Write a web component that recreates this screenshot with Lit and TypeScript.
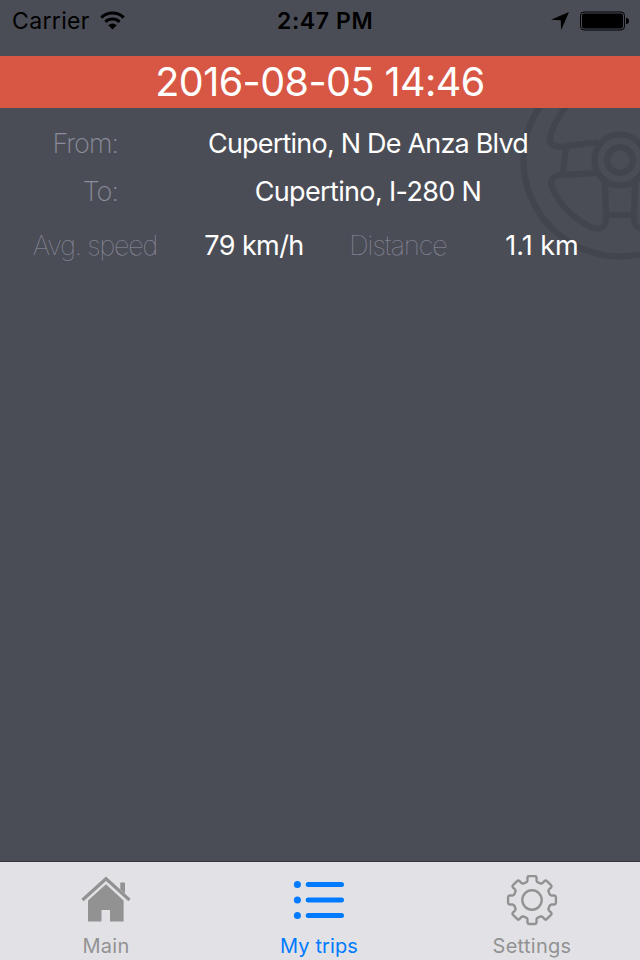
import { LitElement, html, css, svg } from "lit";
import { customElement, property } from "lit/decorators.js";

function gearPath(cx: number, cy: number): string {
  const pt = (r: number, a: number) =>
    `${(cx + r * Math.sin(a)).toFixed(2)} ${(cy - r * Math.cos(a)).toFixed(2)}`;
  let d = "";
  for (let k = 0; k < 8; k++) {
    const a = (k * Math.PI) / 4;
    d += `${k ? "L" : "M"}${pt(18.6, a - 0.3)}`;
    d += `Q${pt(19.1, a - 0.24)} ${pt(20.2, a - 0.225)}`;
    d += `L${pt(23, a - 0.2)}Q${pt(24.2, a - 0.18)} ${pt(24.1, a - 0.12)}`;
    d += `L${pt(24.1, a + 0.12)}Q${pt(24.2, a + 0.18)} ${pt(23, a + 0.2)}`;
    d += `L${pt(20.2, a + 0.225)}Q${pt(19.1, a + 0.24)} ${pt(18.6, a + 0.3)}`;
  }
  return d + "Z";
}

const icons = {
  home: svg`
    <path d="M2.500 25 26 3.700 49.500 25" fill="none" stroke="#929292" stroke-width="3.200"/>
    <path d="M26 9.300 43.600 25.500V46.500H30V35H21.500V46.500H8V25.500Z" fill="#929292"/>
    <path d="M40.300 7.500H45V18.500L40.300 14.200Z" fill="#929292"/>`,
  list: svg`
    <g stroke="#007aff" stroke-width="5" stroke-linecap="round">
      <path d="M15.200 9.500H48.500M15.200 25H48.500M15.200 40.500H48.500"/>
    </g>
    <g fill="#007aff"><circle cx="4.400" cy="9.500" r="3.500"/><circle cx="4.400" cy="25" r="3.500"/><circle cx="4.400" cy="40.500" r="3.500"/></g>`,
  gear: svg`
    <g fill="none" stroke="#929292" stroke-width="2.400" stroke-linejoin="round">
      <path d=${gearPath(26, 25)}/><circle cx="26" cy="25" r="9.700"/>
    </g>`,
};

@customElement("status-bar")
class StatusBar extends LitElement {
  static styles = css`
    :host { display: grid; grid-template-columns: 277px 1fr auto; align-items: center; height: 41px; padding-right: 11px; margin-bottom: 15px; font-size: 23px; color: #000; box-sizing: border-box; }
    .side { display: flex; align-items: center; }
    .left { padding-left: 12px; }
    .carrier { letter-spacing: 0.35px; margin-right: 10px; }
    .time { font-weight: 600; letter-spacing: 0.6px; }
    .arrow { margin-right: 11px; }
    svg { display: block; }
  `;
  render() {
    return html`
      <div class="side left">
        <span class="carrier">Carrier</span>
        <svg width="25" height="19" viewBox="0 0 25 19">
          <g fill="none" stroke="#000" stroke-width="3">
            <path d="M1.300 6.600A16 16 0 0 1 23.700 6.600"/>
            <path d="M5.400 10.900A10.300 10.300 0 0 1 19.600 10.900"/>
          </g>
          <path d="M12.500 18.500 8.300 14.200A6 6 0 0 1 16.700 14.200Z"/>
        </svg>
      </div>
      <span class="time">2:47 PM</span>
      <div class="side">
        <svg class="arrow" width="18" height="18" viewBox="0 0 18 18"><path d="M18 0 10.200 18 9.700 8.300 0 7.800Z"/></svg>
        <svg width="49" height="20" viewBox="0 0 49 20">
          <rect x=".5" y="1" width="44" height="18" rx="3.500" fill="none" stroke="#000"/>
          <rect x="2" y="2.500" width="41" height="15" rx="2"/>
          <path d="M46 6.700q3 .6 3 3.300t-3 3.300Z"/>
        </svg>
      </div>`;
  }
}

@customElement("trip-card")
class TripCard extends LitElement {
  @property() date = "";
  @property() from = "";
  @property() to = "";
  @property() speed = "";
  @property() distance = "";
  static styles = css`
    :host { display: block; font-size: 27px; color: #fff; }
    .date { background: #d85744; height: 52px; line-height: 53px; text-align: center; font-size: 39.5px; letter-spacing: -0.55px; }
    .body { position: relative; overflow: hidden; padding-top: 12px; height: 152px; }
    .wheel { position: absolute; right: 0; top: 0; }
    .row { position: relative; display: grid; grid-template-columns: 118px 500px; height: 48px; line-height: 48px; white-space: nowrap; }
    .label { font-weight: 200; color: #8c8c9c; letter-spacing: -0.95px; }
    .row .label { text-align: right; }
    .stats { position: relative; display: grid; grid-template-columns: 190px 128px 160px 128px; height: 48px; line-height: 48px; margin-top: 6px; white-space: nowrap; text-align: center; }
    .stats .label { font-weight: 100; color: #9292a2; }
    .stats .speed { letter-spacing: -1.150px; }
    .value { letter-spacing: -0.6px; }
    .row .value { text-align: center; letter-spacing: -0.8px; }
    .row.to .value { letter-spacing: -0.65px; }
    .value.distance { letter-spacing: 0; }
  `;
  render() {
    return html`
      <div class="date">${this.date}</div>
      <div class="body">
        <svg class="wheel" width="140" height="156" viewBox="500 108 140 156">
          <g fill="none" stroke="#42454e" stroke-width="6.200">
            <circle cx="620" cy="160" r="96.500"/>
            <circle cx="620" cy="160" r="25.500"/>
            <circle cx="620" cy="160" r="12.800"/>
            <path d="M598 142 561 147Q546 146 551 134C556 119 562 111 572 100"/>
            <path d="M566 148 562.500 175"/>
            <path d="M597 173 562 175Q548 176 552 187C560 207 577 221 592 227.500Q604 232 606 220L605 182"/>
            <path d="M606 215H635"/>
            <path d="M635 182 634 220Q636 232 648 227.500"/>
          </g>
        </svg>
        <div class="row"><span class="label">From:</span><span class="value">${this.from}</span></div>
        <div class="row to"><span class="label">To:</span><span class="value">${this.to}</span></div>
        <div class="stats">
          <span class="label speed">Avg. speed</span><span class="value">${this.speed}</span>
          <span class="label">Distance</span><span class="value distance">${this.distance}</span>
        </div>
      </div>`;
  }
}

@customElement("tab-bar")
class TabBar extends LitElement {
  static styles = css`
    :host { display: grid; grid-template-columns: repeat(3, 213px); height: 98px; background: #e2e2e6; border-top: 1px solid #36373d; font-size: 20px; color: #929292; }
    .tab { display: flex; flex-direction: column; align-items: center; padding: 13px 1px 0 0; box-sizing: border-box; letter-spacing: 0.3px; }
    .tab.active { color: #007aff; letter-spacing: 0.1px; }
    .name { line-height: 24px; margin-top: 7px; }
    svg { display: block; }
  `;
  render() {
    const tabs = [
      { name: "Main", icon: icons.home, active: false },
      { name: "My trips", icon: icons.list, active: true },
      { name: "Settings", icon: icons.gear, active: false },
    ];
    return tabs.map(
      (t) => html`<div class="tab ${t.active ? "active" : ""}">
        <svg width="52" height="52" viewBox="0 0 52 52">${t.icon}</svg>
        <span class="name">${t.name}</span>
      </div>`
    );
  }
}

@customElement("app-root")
class AppRoot extends LitElement {
  static styles = css`
    :host { display: flex; flex-direction: column; width: 640px; height: 960px; overflow: hidden; background: #4b4d56; font-family: Inter, "Liberation Sans", sans-serif; }
    .trips { flex: 1; }
  `;
  render() {
    return html`
      <status-bar></status-bar>
      <div class="trips">
        <trip-card date="2016-08-05 14:46" from="Cupertino, N De Anza Blvd" to="Cupertino, I-280 N" speed="79 km/h" distance="1.1 km"></trip-card>
      </div>
      <tab-bar></tab-bar>`;
  }
}
